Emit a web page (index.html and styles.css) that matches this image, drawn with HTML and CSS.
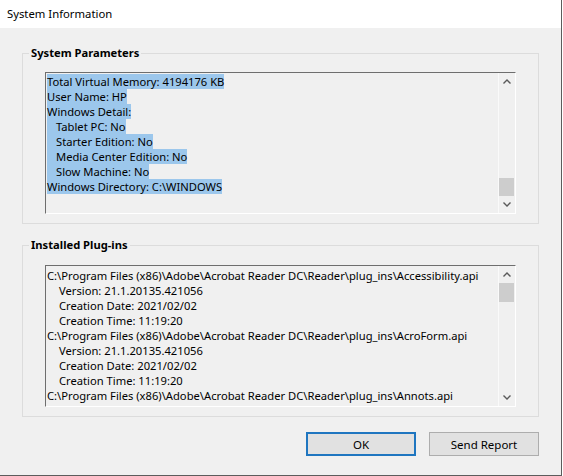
FILE: index.html
```html
<!DOCTYPE html>
<html>
<head>
<meta charset="utf-8">
<title>System Information</title>
<link rel="stylesheet" href="styles.css">
</head>
<body>
<div class="window">
  <div class="titlebar">System Information</div>
  <div class="client">
    <fieldset class="group group-params">
      <legend>System Parameters</legend>
      <div class="listbox">
        <div class="lines lines-sel">
          <div class="line"><span class="sel">Total Virtual Memory: 4194176 KB</span></div>
          <div class="line"><span class="sel">User Name: HP</span></div>
          <div class="line"><span class="sel">Windows Detail:</span></div>
          <div class="line"><span class="sel"><span class="ind1"></span>Tablet PC: No</span></div>
          <div class="line"><span class="sel"><span class="ind1"></span>Starter Edition: No</span></div>
          <div class="line"><span class="sel"><span class="ind1"></span>Media Center Edition: No</span></div>
          <div class="line"><span class="sel"><span class="ind1"></span>Slow Machine: No</span></div>
          <div class="line"><span class="sel">Windows Directory: C:\WINDOWS</span></div>
        </div>
        <div class="vscroll">
          <div class="arrow"><svg width="8" height="5" viewBox="0 0 8 5"><polyline points="0.5,4.5 4,1 7.5,4.5" fill="none" stroke="#5a5a5a" stroke-width="1.4"/></svg></div>
          <div class="track track-end"><div class="thumb"></div></div>
          <div class="arrow"><svg width="8" height="5" viewBox="0 0 8 5"><polyline points="0.5,0.5 4,4 7.5,0.5" fill="none" stroke="#5a5a5a" stroke-width="1.4"/></svg></div>
        </div>
      </div>
    </fieldset>

    <fieldset class="group group-plugins">
      <legend>Installed Plug-ins</legend>
      <div class="listbox">
        <div class="lines lines-plain">
          <div class="line">C:\Program Files (x86)\Adobe\Acrobat Reader DC\Reader\plug_ins\Accessibility.api</div>
          <div class="line ind2">Version: 21.1.20135.421056</div>
          <div class="line ind2">Creation Date: 2021/02/02</div>
          <div class="line ind2">Creation Time: 11:19:20</div>
          <div class="line">C:\Program Files (x86)\Adobe\Acrobat Reader DC\Reader\plug_ins\AcroForm.api</div>
          <div class="line ind2">Version: 21.1.20135.421056</div>
          <div class="line ind2">Creation Date: 2021/02/02</div>
          <div class="line ind2">Creation Time: 11:19:20</div>
          <div class="line">C:\Program Files (x86)\Adobe\Acrobat Reader DC\Reader\plug_ins\Annots.api</div>
          <div class="line ind2">Version: 21.1.20135.421056</div>
        </div>
        <div class="vscroll">
          <div class="arrow"><svg width="8" height="5" viewBox="0 0 8 5"><polyline points="0.5,4.5 4,1 7.5,4.5" fill="none" stroke="#5a5a5a" stroke-width="1.4"/></svg></div>
          <div class="track"><div class="thumb thumb-2"></div></div>
          <div class="arrow"><svg width="8" height="5" viewBox="0 0 8 5"><polyline points="0.5,0.5 4,4 7.5,0.5" fill="none" stroke="#5a5a5a" stroke-width="1.4"/></svg></div>
        </div>
      </div>
    </fieldset>

    <div class="buttons">
      <button class="btn btn-default">OK</button>
      <button class="btn">Send Report</button>
    </div>
  </div>
</div>
</body>
</html>
```

FILE: styles.css
```css
* { box-sizing: border-box; }

html, body {
  margin: 0;
  padding: 0;
  background: #ffffff;
}

body {
  font-family: "Noto Sans", "Open Sans", sans-serif;
  font-size: 11.2px;
  color: #000;
}

.window {
  width: 562px;
  height: 476px;
  background: #f0f0f0;
  border-right: 1px solid #5c5c5c;
  border-bottom: 1px solid #5c5c5c;
  display: flex;
  flex-direction: column;
  overflow: hidden;
}

.titlebar {
  height: 28px;
  flex: none;
  background: #ffffff;
  padding-left: 7px;
  line-height: 27px;
  font-size: 11.3px;
}

.client {
  flex: 1;
  padding-left: 22px;
}

.group {
  width: 517px;
  margin: 0;
  padding: 0 22px 9px 22px;
  border: 1px solid #dcdcdc;
  min-width: 0;
}

.group legend {
  font-weight: bold;
  font-size: 11.2px;
  line-height: 14px;
  margin-left: -16px;
  padding: 0 2px;
}

.group-params {
  margin-top: 18px;
}

.group-params .listbox {
  margin-top: 12px;
}

.group-plugins {
  margin-top: 14px;
}

.group-plugins .listbox {
  margin-top: 13px;
}

.listbox {
  width: 471px;
  height: 142px;
  display: flex;
  border-top: 1px solid #6e6e6e;
  border-left: 1px solid #6e6e6e;
  border-right: 1px solid #ffffff;
  border-bottom: 1px solid #ffffff;
  background: #f0f0f0;
  overflow: hidden;
}

.lines {
  flex: 1;
  min-width: 0;
  overflow: hidden;
  padding-left: 1px;
}

.lines-sel { padding-top: 1px; }
.lines-plain { padding-top: 2px; }

.line {
  height: 15px;
  line-height: 15px;
  white-space: pre;
}

.sel {
  display: inline-block;
  height: 15px;
  background: #9cc7ec;
}

.ind1 {
  display: inline-block;
  width: 9px;
}

.ind2 {
  padding-left: 12px;
}

.vscroll {
  width: 17px;
  flex: none;
  display: flex;
  flex-direction: column;
  border-left: 1px solid #fafafa;
  background: #f0f0f0;
}

.arrow {
  height: 17px;
  flex: none;
  display: flex;
  align-items: center;
  justify-content: center;
}

.arrow svg { display: block; }

.track {
  flex: 1;
  display: flex;
  flex-direction: column;
}

.track-end { justify-content: flex-end; }

.thumb {
  height: 18px;
  width: 15px;
  background: #cdcdcd;
}

.thumb-2 { height: 19px; }

.buttons {
  width: 517px;
  margin-top: 15px;
  display: flex;
  justify-content: flex-end;
  gap: 13px;
}

.btn {
  width: 110px;
  height: 24px;
  background: #e1e1e1;
  border: 1px solid #adadad;
  font-family: "Noto Sans", "Open Sans", sans-serif;
  font-size: 11.5px;
  color: #000;
  padding: 0;
  margin: 0;
}

.btn-default {
  border: 2px solid #1f76c0;
}
```
